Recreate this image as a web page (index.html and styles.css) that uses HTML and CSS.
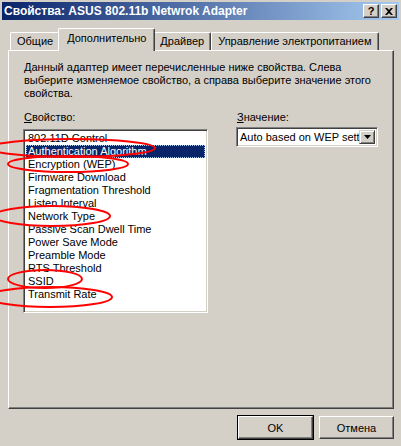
FILE: index.html
```html
<!DOCTYPE html>
<html lang="ru">
<head>
  <meta charset="UTF-8">
  <title>Свойства: ASUS 802.11b Netwrok Adapter</title>
  <link rel="stylesheet" href="styles.css">
</head>
<body>
  <div class="window">
    <div class="titlebar">
      <span class="title">Свойства: ASUS 802.11b Netwrok Adapter</span>
      <div class="caption-btns">
        <span class="cbtn">?</span>
        <span class="cbtn">
          <svg width="8" height="7" viewBox="0 0 8 7"><path d="M0 0h2l2 2 2-2h2L5 3.5 8 7H6L4 5 2 7H0l3-3.5z" fill="#000"/></svg>
        </span>
      </div>
    </div>

    <!-- вкладки -->
    <div class="tabs">
      <div class="tab">Общие</div>
      <div class="tab active">Дополнительно</div>
      <div class="tab">Драйвер</div>
      <div class="tab">Управление электропитанием</div>
    </div>

    <div class="panel">
      <p class="intro">Данный адаптер имеет перечисленные ниже свойства. Слева выберите изменяемое свойство, а справа выберите значение этого свойства.</p>

      <div class="fields">
        <div class="field-prop">
          <div class="label"><u>С</u>войство:</div>
          <ul class="listbox">
            <li>802.11D Control</li>
            <li class="selected"><span>Authentication Algorithm</span></li>
            <li>Encryption (WEP)</li>
            <li>Firmware Download</li>
            <li>Fragmentation Threshold</li>
            <li>Listen Interval</li>
            <li>Network Type</li>
            <li>Passive Scan Dwell Time</li>
            <li>Power Save Mode</li>
            <li>Preamble Mode</li>
            <li>RTS Threshold</li>
            <li>SSID</li>
            <li>Transmit Rate</li>
          </ul>
        </div>
        <div class="field-val">
          <div class="label"><u>З</u>начение:</div>
          <div class="combo">
            <span class="combo-text">Auto based on WEP setti</span>
            <span class="combo-btn">
              <svg width="7" height="4" viewBox="0 0 7 4"><path d="M0 0h7L3.5 4z" fill="#000"/></svg>
            </span>
          </div>
        </div>
      </div>
    </div>

    <div class="actions">
      <button class="btn default">OK</button>
      <button class="btn">Отмена</button>
    </div>
  </div>

  <!-- красные пометки поверх списка -->
  <svg class="marks" width="401" height="446" viewBox="0 0 401 446">
    <g fill="none" stroke="#f00" stroke-width="2">
      <ellipse cx="72" cy="148" rx="83" ry="9"/>
      <ellipse cx="68" cy="164" rx="60" ry="8"/>
      <ellipse cx="52" cy="216" rx="58" ry="10"/>
      <ellipse cx="45" cy="279" rx="37" ry="9"/>
      <ellipse cx="50" cy="297" rx="62" ry="10"/>
    </g>
  </svg>
</body>
</html>
```

FILE: styles.css
```css
body {
  margin: 0;
  width: 401px;
  height: 446px;
  overflow: hidden;
  background-color: #d4d0c8;
  font-family: "Liberation Sans", Arial, sans-serif;
  font-size: 11px;
  color: #000;
  position: relative;
}
.window {
  padding: 2px 2px 0 2px;
}
.titlebar {
  height: 18px;
  display: flex;
  align-items: center;
  justify-content: space-between;
  padding: 0 2px 0 2px;
  background: linear-gradient(to right, #0a246a, #a6caf0);
}
.title {
  color: #fff;
  font-weight: bold;
  font-size: 12px;
}
.caption-btns {
  display: flex;
  gap: 2px;
}
.cbtn {
  width: 16px;
  height: 14px;
  box-sizing: border-box;
  display: flex;
  align-items: center;
  justify-content: center;
  background-color: #d4d0c8;
  border: 1px solid;
  border-color: #fff #404040 #404040 #fff;
  box-shadow: inset -1px -1px #808080;
  font-weight: bold;
  font-size: 11px;
}
.tabs {
  display: flex;
  align-items: flex-end;
  height: 22px;
  margin-top: 8px;
  padding-left: 8px;
}
.tab {
  height: 18px;
  box-sizing: border-box;
  padding: 2px 6px 0 6px;
  border: 1px solid #fff;
  border-bottom: none;
  border-right: 1px solid #404040;
  box-shadow: inset -1px 0 #808080;
  border-radius: 2px 2px 0 0;
  background-color: #d4d0c8;
}
.tab.active {
  height: 23px;
  margin: 0 -2px -1px;
  padding: 3px 8px 0;
  position: relative;
  z-index: 1;
}
.panel {
  margin-left: 6px;
  width: 386px;
  height: 359px;
  box-sizing: border-box;
  border: 1px solid;
  border-color: #fff #404040 #404040 #fff;
  box-shadow: inset -1px -1px #808080;
  padding: 10px 0 0 14px;
}
.intro {
  margin: 0 0 0 1px;
  width: 355px;
  line-height: 13px;
}
.fields {
  display: flex;
  gap: 28px;
  margin-top: 11px;
}
.label {
  line-height: 13px;
  margin-left: 1px;
}
.listbox {
  list-style: none;
  margin: 5px 0 0;
  padding: 0;
  width: 185px;
  height: 184px;
  box-sizing: border-box;
  background-color: #fff;
  border: 1px solid;
  border-color: #808080 #fff #fff #808080;
  box-shadow: inset 1px 1px #404040, inset -1px -1px #d4d0c8;
  padding: 2px 2px;
}
.listbox li {
  height: 13px;
  line-height: 13px;
  padding-left: 2px;
  white-space: nowrap;
}
.listbox li.selected {
  background-color: #0a246a;
  color: #fff;
  outline: 1px dotted #a6caf0;
  outline-offset: -1px;
}
.combo {
  margin-top: 3px;
  width: 142px;
  height: 20px;
  box-sizing: border-box;
  display: flex;
  background-color: #fff;
  border: 1px solid;
  border-color: #808080 #fff #fff #808080;
  box-shadow: inset 1px 1px #404040, inset -1px -1px #d4d0c8;
  padding: 2px;
}
.combo-text {
  flex: 1;
  overflow: hidden;
  white-space: nowrap;
  line-height: 14px;
  padding-left: 1px;
}
.combo-btn {
  width: 16px;
  box-sizing: border-box;
  display: flex;
  align-items: center;
  justify-content: center;
  background-color: #d4d0c8;
  border: 1px solid;
  border-color: #d4d0c8 #404040 #404040 #d4d0c8;
  box-shadow: inset 1px 1px #fff, inset -1px -1px #808080;
}
.actions {
  display: flex;
  justify-content: flex-end;
  gap: 6px;
  margin-top: 7px;
  padding-right: 5px;
}
.btn {
  width: 75px;
  height: 23px;
  font-family: "Liberation Sans", Arial, sans-serif;
  font-size: 11px;
  color: #000;
  background-color: #d4d0c8;
  border: 1px solid;
  border-color: #fff #404040 #404040 #fff;
  box-shadow: inset -1px -1px #808080;
  padding: 0;
}
.btn.default {
  outline: 1px solid #000;
  outline-offset: 0;
}
.marks {
  position: absolute;
  left: 0;
  top: 0;
  pointer-events: none;
}
```
